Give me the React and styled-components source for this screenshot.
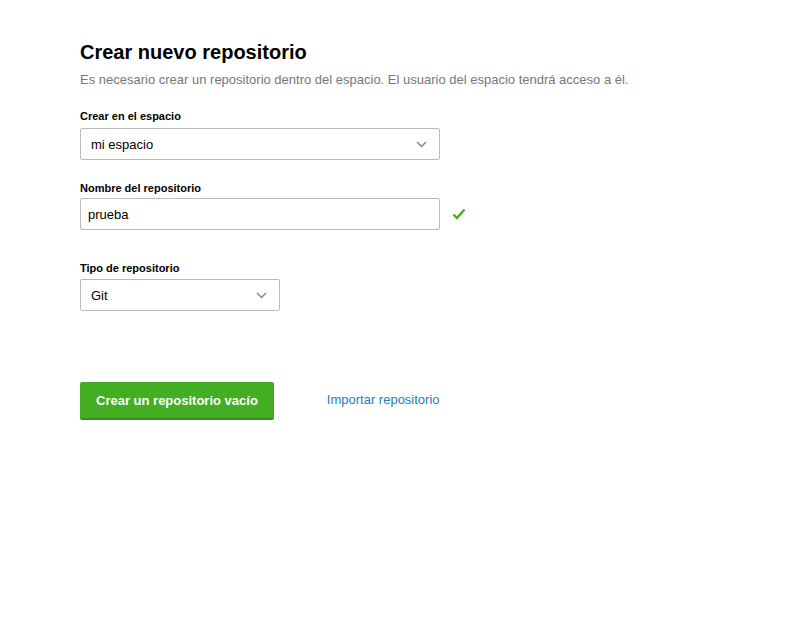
import styled, { createGlobalStyle } from 'styled-components'

const GlobalStyle = createGlobalStyle`
  body {
    margin: 0;
    background: #fff;
    font-family: "Liberation Sans", Arial, sans-serif;
    color: #000;
  }
`

const Page = styled.div`
  padding: 40px 80px;
`

const Title = styled.h1`
  font-size: 20px;
  font-weight: bold;
  margin: 0 0 8px;
  line-height: 24px;
`

const Subtitle = styled.p`
  color: #777;
  font-size: 13px;
  margin: 0 0 21px;
  line-height: 16px;
`

const Field = styled.div`
  margin-bottom: ${p => p.$gap || 21}px;
`

const Label = styled.label`
  display: block;
  font-size: 11px;
  font-weight: bold;
  line-height: 14px;
  margin-bottom: ${p => p.$mb ?? 5}px;
`

const Row = styled.div`
  align-items: center;
  display: flex;
`

const Box = styled.div`
  align-items: center;
  border: 1px solid #b9b9b9;
  border-radius: 2px;
  box-sizing: border-box;
  display: flex;
  font-size: 13px;
  height: 32px;
  justify-content: space-between;
  padding: 0 12px 0 ${p => (p.$select ? 10 : 7)}px;
  width: ${p => p.$width}px;
`

const Check = styled.svg`
  margin-left: 12px;
`

const Actions = styled.div`
  align-items: center;
  display: flex;
  gap: 53px;
  margin-top: 71px;
`

const Button = styled.button`
  background: #43ae21;
  border: none;
  border-bottom: 2px solid #3a8e1f;
  border-radius: 2px;
  color: #fff;
  font-family: inherit;
  font-size: 13px;
  font-weight: bold;
  height: 38px;
  padding: 0 16px;
`

const Link = styled.a`
  color: #2a7ac2;
  font-size: 13px;
  padding-bottom: 3px;
  text-decoration: none;
`

const Chevron = () => (
  <svg width="11" height="7" viewBox="0 0 11 7">
    <path d="M1 1l4.5 4.5L10 1" fill="none" stroke="#888" strokeWidth="1.5" />
  </svg>
)

const App = () => (
  <>
    <GlobalStyle />
    <Page>
      <Title>Crear nuevo repositorio</Title>
      <Subtitle>Es necesario crear un repositorio dentro del espacio. El usuario del espacio tendrá acceso a él.</Subtitle>

      <Field>
        <Label>Crear en el espacio</Label>
        <Box $width={360} $select>
          <span>mi espacio</span>
          <Chevron />
        </Box>
      </Field>

      <Field $gap={31}>
        <Label $mb={3}>Nombre del repositorio</Label>
        <Row>
          <Box $width={360}>
            <span>prueba</span>
          </Box>
          <Check width="14" height="12" viewBox="0 0 14 12">
            <path d="M1.5 6.5l3.5 3.5L12.5 1.5" fill="none" stroke="#43ae21" strokeWidth="2.4" />
          </Check>
        </Row>
      </Field>

      <Field>
        <Label $mb={4}>Tipo de repositorio</Label>
        <Box $width={200} $select>
          <span>Git</span>
          <Chevron />
        </Box>
      </Field>

      <Actions>
        <Button>Crear un repositorio vacío</Button>
        <Link href="#">Importar repositorio</Link>
      </Actions>
    </Page>
  </>
)

export default App
